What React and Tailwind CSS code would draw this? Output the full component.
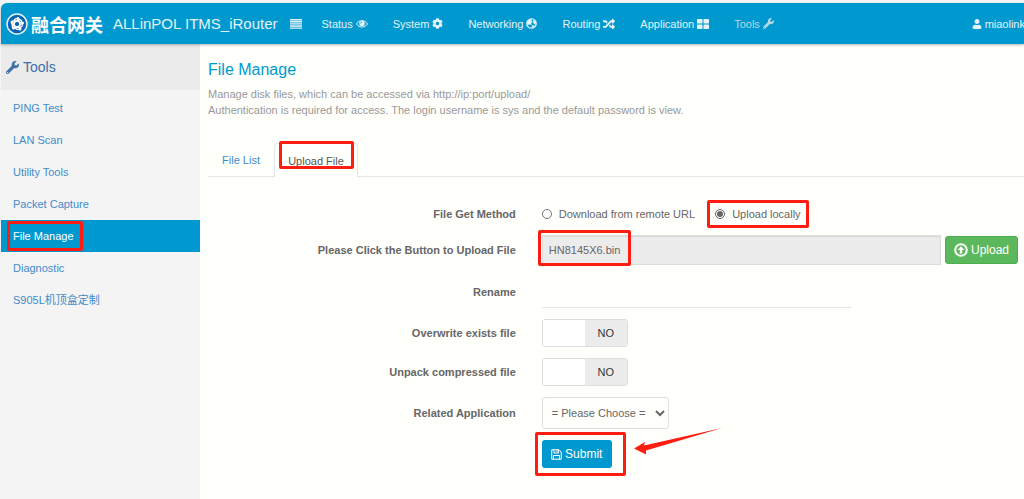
import React, { useState } from 'react';
import { FaCog, FaRandom, FaUser, FaWrench } from 'react-icons/fa';

const MenuIcon = () => (
  <svg width="12" height="10" viewBox="0 0 12 10" fill="currentColor" aria-hidden="true">
    <path d="M0 0h12v1.4H0zM0 2.1h12v1.4H0zM0 4.2h12v1.4H0zM0 6.3h12v1.4H0zM0 8.4h12v1.4H0z" />
  </svg>
);

const EyeIcon = () => (
  <svg width="12" height="11" viewBox="0 0 24 22" fill="none" aria-hidden="true">
    <path d="M1 12C6 3 18 3 23 12C18 20 6 20 1 12Z" stroke="currentColor" strokeWidth="2" />
    <circle cx="12" cy="11" r="5.5" fill="currentColor" />
    <path d="M9 11a3 3 0 0 1 3-3" stroke="#0099cf" strokeWidth="1.5" />
  </svg>
);

const GlobeIcon = () => (
  <svg width="11" height="11" viewBox="0 0 22 22" fill="none" aria-hidden="true">
    <circle cx="11" cy="11" r="9.5" stroke="currentColor" strokeWidth="2.4" />
    <path d="M2 8L6 3L12 2L11 6L13 8L10 11L12 14L8 13L3 14Z" fill="currentColor" />
    <path d="M15 3L20 8L19 13L16 12L14 8Z" fill="currentColor" />
    <path d="M12 15L17 14L15 19L11 20Z" fill="currentColor" />
  </svg>
);

const TilesIcon = () => (
  <svg width="12" height="10" viewBox="0 0 12 10" fill="currentColor" aria-hidden="true">
    <rect width="5.5" height="4.5" rx="0.6" />
    <rect x="6.5" width="5.5" height="4.5" rx="0.6" />
    <rect y="5.5" width="5.5" height="4.5" rx="0.6" />
    <rect x="6.5" y="5.5" width="5.5" height="4.5" rx="0.6" />
  </svg>
);

const UploadIcon = () => (
  <svg width="14" height="14" viewBox="0 0 14 14" fill="none" aria-hidden="true">
    <circle cx="7" cy="7" r="5.8" stroke="currentColor" strokeWidth="2" />
    <path d="M7 3.2L10.4 7H8.2V10.4H5.8V7H3.6Z" fill="currentColor" />
  </svg>
);

const SaveIcon = () => (
  <svg width="11" height="11" viewBox="0 0 22 22" fill="none" stroke="currentColor" strokeWidth="2" aria-hidden="true">
    <path d="M1.5 1.5H16L20.5 6V20.5H1.5Z" strokeLinejoin="round" />
    <path d="M6 1.5V8H15V1.5M5 20V13H17V20" />
    <path d="M12 2V6" />
  </svg>
);

const Logo = () => (
  <svg width="22" height="22" viewBox="0 0 44 44" fill="none" aria-hidden="true">
    <circle cx="22" cy="22" r="20" fill="#0b63b5" stroke="#e6f4fb" strokeWidth="3" />
    <g stroke="#fff" strokeWidth="2.6">
      <ellipse cx="22" cy="22" rx="11" ry="5.5" transform="rotate(20 22 22)" />
      <ellipse cx="22" cy="22" rx="11" ry="5.5" transform="rotate(80 22 22)" />
      <ellipse cx="22" cy="22" rx="11" ry="5.5" transform="rotate(140 22 22)" />
    </g>
    <g fill="#fff">
      <circle cx="12" cy="18" r="3" />
      <circle cx="24" cy="11" r="3" />
      <circle cx="33" cy="20" r="3" />
      <circle cx="28" cy="32" r="3" />
      <circle cx="15" cy="30" r="3" />
    </g>
  </svg>
);

const navItems = [
  { label: 'Status', icon: <EyeIcon /> },
  { label: 'System', icon: <FaCog size={11} /> },
  { label: 'Networking', icon: <GlobeIcon /> },
  { label: 'Routing', icon: <FaRandom size={12} /> },
  { label: 'Application', icon: <TilesIcon /> },
  { label: 'Tools', icon: <FaWrench size={11} />, current: true },
];

const sideItems = ['PING Test', 'LAN Scan', 'Utility Tools', 'Packet Capture', 'File Manage', 'Diagnostic', 'S905L机顶盒定制'];

// Red frame laid over the element it highlights
const Highlight = ({ className }) => (
  <span className={`pointer-events-none absolute rounded-[2px] border-3 border-[#ff1c10] ${className}`} />
);

const Row = ({ label, htmlFor, children }) => (
  <div className="grid grid-cols-[38%_1fr] items-center gap-[26px]">
    {label ? <label htmlFor={htmlFor} className="text-right font-bold text-[#666]">{label}</label> : <span />}
    <div className="flex items-center">{children}</div>
  </div>
);

const Toggle = ({ id, checked, onChange }) => (
  <label className="relative flex h-7 w-[86px] cursor-pointer overflow-hidden rounded-[3px] border border-[#ddd] bg-white text-[#333]">
    <input id={id} type="checkbox" checked={checked} onChange={onChange} className="sr-only" />
    <span className={`flex w-1/2 items-center justify-center ${checked ? 'bg-[#0099cf] text-white' : 'order-last bg-[#ececec]'}`}>
      {checked ? 'YES' : 'NO'}
    </span>
    <span className="w-1/2 bg-white" />
  </label>
);

const App = () => {
  const [method, setMethod] = useState('local');
  const [rename, setRename] = useState('');
  const [overwrite, setOverwrite] = useState(false);
  const [unpack, setUnpack] = useState(false);

  return (
    <div className="flex min-h-screen flex-col bg-[#f5f5f5] pt-[3px] pl-px font-['Liberation_Sans','Noto_Sans_CJK_SC',sans-serif] text-[11px] leading-4 text-[#666]">
      <header className="z-10 flex h-[41px] items-center overflow-hidden rounded-tl-md bg-[#0099cf] pl-[5px] text-[#e4f3f9] shadow-[0_1px_3px_rgba(0,0,0,0.3)]">
        <a href="#home" className="flex shrink-0 items-center whitespace-nowrap text-[15px]">
          <Logo />
          <span className="ml-[3px] font-['Noto_Sans_CJK_SC',sans-serif] text-lg font-bold text-white">融合网关</span>
          <span className="ml-[10px]">ALLinPOL ITMS_iRouter</span>
        </a>
        <button type="button" aria-label="Toggle menu" className="ml-3 shrink-0">
          <MenuIcon />
        </button>
        <nav className="ml-5 flex gap-[25px]">
          {navItems.map((item) => (
            <a
              key={item.label}
              href={`#${item.label.toLowerCase()}`}
              className={`flex items-center gap-[3px] whitespace-nowrap ${item.current ? 'text-[#b9d8e5]' : ''}`}
            >
              {item.label} {item.icon}
            </a>
          ))}
        </nav>
        <a href="#user" className="-mr-px ml-auto flex shrink-0 items-center gap-[3px]">
          <FaUser size={10} />
          miaolink
        </a>
      </header>

      <div className="flex flex-1">
        <aside className="w-[199px] shrink-0 bg-[#f4f4f4]">
          <h2 className="flex h-[46px] items-center gap-1 bg-[#ebebeb] pl-[5px] text-sm text-[#3d6fa8]">
            <FaWrench size={13} />
            Tools
          </h2>
          <ul className="pt-[2px]">
            {sideItems.map((item) => {
              const active = item === 'File Manage';
              return (
                <li key={item}>
                  <a
                    href="#tools"
                    className={`relative flex h-8 items-center pl-3 ${active ? 'bg-[#0099cf] text-white' : 'text-[#428bca]'}`}
                  >
                    {item}
                    {active && <Highlight className="inset-y-px left-[6px] w-[76px]" />}
                  </a>
                </li>
              );
            })}
          </ul>
        </aside>

        <main className="min-w-0 flex-1 bg-[#fffffc] pt-4 pl-2">
          <h1 className="text-base leading-5 text-[#0099cf]">File Manage</h1>
          <p className="mt-[6px] text-[#999]">
            Manage disk files, which can be accessed via http://ip:port/upload/
            <br />
            Authentication is required for access. The login username is sys and the default password is view.
          </p>

          {/* Tabs */}
          <div className="mt-[25px] flex h-[34px] border-b border-[#e6e6e6]" role="tablist">
            <button type="button" role="tab" aria-selected="false" className="w-[66px] text-[#428bca]">File List</button>
            <button
              type="button"
              role="tab"
              aria-selected="true"
              className="relative -mb-px w-[84px] rounded-t border border-b-0 border-[#e6e6e6] bg-[#fffffc] text-[#555]"
            >
              Upload File
              <Highlight className="-top-[3px] left-1 h-7 w-[75px]" />
            </button>
          </div>

          <form className="mt-[27px] flex flex-col gap-[11px] pr-[6px]" onSubmit={(e) => e.preventDefault()}>
            <Row label="File Get Method" htmlFor="method-remote">
              <div className="flex h-5 items-center gap-5">
                <label className="flex items-center gap-[7px]">
                  <input
                    id="method-remote"
                    type="radio"
                    name="method"
                    className="size-[10px] accent-[#666]"
                    checked={method === 'remote'}
                    onChange={() => setMethod('remote')}
                  />
                  Download from remote URL
                </label>
                <label className="relative flex items-center gap-[7px]">
                  <input
                    type="radio"
                    name="method"
                    className="size-[10px] accent-[#666]"
                    checked={method === 'local'}
                    onChange={() => setMethod('local')}
                  />
                  Upload locally
                  <Highlight className="-inset-x-2 -inset-y-[6px]" />
                </label>
              </div>
            </Row>

            <Row label="Please Click the Button to Upload File" htmlFor="upload-file">
              <div className="relative flex-1">
                <input
                  id="upload-file"
                  type="text"
                  readOnly
                  value="HN8145X6.bin"
                  className="block h-[30px] w-full border border-[#ddd] bg-[#ececec] px-[6px] text-[#666] shadow-[inset_0_1px_1px_rgba(0,0,0,0.08)]"
                />
                <Highlight className="-top-[5px] -left-1 h-9 w-[93px]" />
              </div>
              <button type="button" className="ml-1 flex h-7 w-[73px] items-center justify-center gap-[3px] rounded-[3px] border border-[#4cae4c] bg-[#5cb85c] text-xs text-white">
                <UploadIcon />
                Upload
              </button>
            </Row>

            <Row label="Rename" htmlFor="rename">
              <input
                id="rename"
                type="text"
                value={rename}
                onChange={(e) => setRename(e.target.value)}
                className="h-8 w-[65%] border-b border-[#e6e6e6] bg-transparent px-[6px] outline-none"
              />
            </Row>

            <Row label="Overwrite exists file" htmlFor="overwrite">
              <Toggle id="overwrite" checked={overwrite} onChange={() => setOverwrite(!overwrite)} />
            </Row>

            <Row label="Unpack compressed file" htmlFor="unpack">
              <Toggle id="unpack" checked={unpack} onChange={() => setUnpack(!unpack)} />
            </Row>

            <Row label="Related Application" htmlFor="application">
              <select id="application" className="h-8 w-[127px] rounded-[3px] border border-[#e0e0e0] bg-[#fffffc] px-[5px] text-[#666]">
                <option>= Please Choose =</option>
              </select>
            </Row>

            <Row>
              <div className="relative">
                <button type="submit" className="flex h-7 w-[70px] items-center justify-center gap-[3px] rounded-[3px] bg-[#0099cf] text-xs text-white">
                  <SaveIcon />
                  Submit
                </button>
                <Highlight className="-inset-y-2 -left-[7px] w-[91px]" />
                <svg className="pointer-events-none absolute -top-3 left-[92px]" width="88" height="28" viewBox="0 0 88 28" aria-hidden="true">
                  <path d="M0 20.5L11 14L10 17.5L88 0L12 22.5L12 26.5Z" fill="#ff1c10" />
                </svg>
              </div>
            </Row>
          </form>
        </main>
      </div>
    </div>
  );
};

export default App;
